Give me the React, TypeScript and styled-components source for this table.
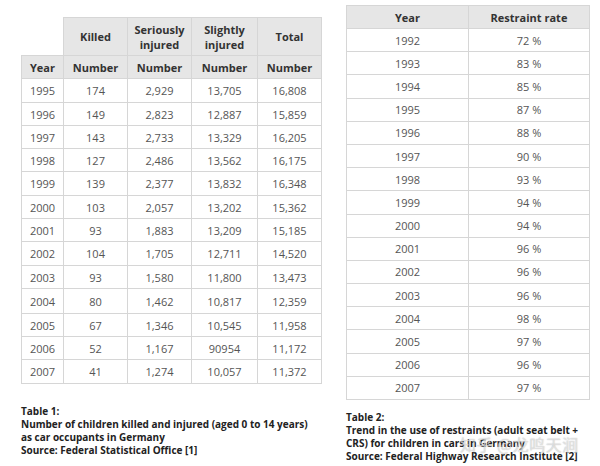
import React from "react";
import styled, { createGlobalStyle } from "styled-components";

const Global = createGlobalStyle`
  html, body { margin: 0; padding: 0; background: #ffffff; }
  body { font-family: "Open Sans", "Noto Sans", sans-serif; }
`;

const Page = styled.div`
  position: relative;
  width: 600px;
  height: 466px;
  display: flex;
  align-items: flex-start;
  overflow: hidden;
`;

const LeftColumn = styled.div`
  margin-left: 21px;
  margin-top: 17px;
  width: 300px;
  display: flex;
  flex-direction: column;
`;

const RightColumn = styled.div`
  margin-left: 25px;
  margin-top: 5px;
  width: 243px;
  display: flex;
  flex-direction: column;
`;

const Table = styled.table`
  border-collapse: collapse;
  table-layout: fixed;
  width: 100%;
  font-size: 11px;
  color: #555;
`;

const Row = styled.tr<{ $h: number }>`
  height: ${(p) => p.$h}px;
`;

const Cell = styled.td`
  border: 1px solid #d6d6d6;
  text-align: center;
  padding: 0;
  line-height: 13px;
  box-sizing: border-box;
`;

const HeadCell = styled(Cell)`
  background: #e6e6e6;
  font-weight: 700;
  color: #333;
  line-height: 15px;
`;

const BlankCell = styled.td`
  border: none;
  border-bottom: 1px solid #d6d6d6;
  padding: 0;
`;

const Caption = styled.div<{ $top: number }>`
  margin-top: ${(p) => p.$top}px;
  font-size: 10px;
  line-height: 13px;
  font-weight: 700;
  color: #222;
  white-space: nowrap;
`;

const Watermark = styled.div`
  position: absolute;
  left: 460px;
  top: 432px;
  font-family: "Noto Sans CJK SC", sans-serif;
  font-size: 16px;
  color: rgba(255, 255, 255, 0.55);
  text-shadow: 0 0 1px rgba(120, 120, 120, 0.6);
  letter-spacing: 0.5px;
  white-space: nowrap;
`;

const table1 = [
  ["1995", "174", "2,929", "13,705", "16,808"],
  ["1996", "149", "2,823", "12,887", "15,859"],
  ["1997", "143", "2,733", "13,329", "16,205"],
  ["1998", "127", "2,486", "13,562", "16,175"],
  ["1999", "139", "2,377", "13,832", "16,348"],
  ["2000", "103", "2,057", "13,202", "15,362"],
  ["2001", "93", "1,883", "13,209", "15,185"],
  ["2002", "104", "1,705", "12,711", "14,520"],
  ["2003", "93", "1,580", "11,800", "13,473"],
  ["2004", "80", "1,462", "10,817", "12,359"],
  ["2005", "67", "1,346", "10,545", "11,958"],
  ["2006", "52", "1,167", "90954", "11,172"],
  ["2007", "41", "1,274", "10,057", "11,372"],
];

const table2 = [
  ["1992", "72 %"],
  ["1993", "83 %"],
  ["1994", "85 %"],
  ["1995", "87 %"],
  ["1996", "88 %"],
  ["1997", "90 %"],
  ["1998", "93 %"],
  ["1999", "94 %"],
  ["2000", "94 %"],
  ["2001", "96 %"],
  ["2002", "96 %"],
  ["2003", "96 %"],
  ["2004", "98 %"],
  ["2005", "97 %"],
  ["2006", "96 %"],
  ["2007", "97 %"],
];

const t1Heights = [24, 23, 23, 23, 24, 23, 23, 24, 23, 25, 23, 23, 24];

export default function App() {
  return (
    <>
      <Global />
      <Page>
        <LeftColumn>
          <Table>
            <colgroup>
              <col style={{ width: 42 }} />
              <col style={{ width: 64 }} />
              <col style={{ width: 64 }} />
              <col style={{ width: 66 }} />
              <col style={{ width: 64 }} />
            </colgroup>
            <tbody>
              <Row $h={38}>
                <BlankCell />
                <HeadCell>Killed</HeadCell>
                <HeadCell>
                  Seriously
                  <br />
                  injured
                </HeadCell>
                <HeadCell>
                  Slightly
                  <br />
                  injured
                </HeadCell>
                <HeadCell>Total</HeadCell>
              </Row>
              <Row $h={23}>
                <HeadCell>Year</HeadCell>
                <HeadCell>Number</HeadCell>
                <HeadCell>Number</HeadCell>
                <HeadCell>Number</HeadCell>
                <HeadCell>Number</HeadCell>
              </Row>
              {table1.map((r, i) => (
                <Row $h={t1Heights[i]} key={r[0]}>
                  {r.map((c, j) => (
                    <Cell key={j}>{c}</Cell>
                  ))}
                </Row>
              ))}
            </tbody>
          </Table>
          <Caption $top={21}>
            Table 1:
            <br />
            Number of children killed and injured (aged 0 to 14 years)
            <br />
            as car occupants in Germany
            <br />
            Source: Federal Statistical Office [1]
          </Caption>
        </LeftColumn>
        <RightColumn>
          <Table>
            <colgroup>
              <col style={{ width: 122 }} />
              <col style={{ width: 121 }} />
            </colgroup>
            <tbody>
              <Row $h={23}>
                <HeadCell>Year</HeadCell>
                <HeadCell>Restraint rate</HeadCell>
              </Row>
              {table2.map((r) => (
                <Row $h={23.2} key={r[0]}>
                  <Cell>{r[0]}</Cell>
                  <Cell>{r[1]}</Cell>
                </Row>
              ))}
            </tbody>
          </Table>
          <Caption $top={11}>
            Table 2:
            <br />
            Trend in the use of restraints (adult seat belt +
            <br />
            CRS) for children in cars in Germany
            <br />
            Source: Federal Highway Research Institute [2]
          </Caption>
        </RightColumn>
        <Watermark>知乎 @龙鸣天涧</Watermark>
      </Page>
    </>
  );
}
